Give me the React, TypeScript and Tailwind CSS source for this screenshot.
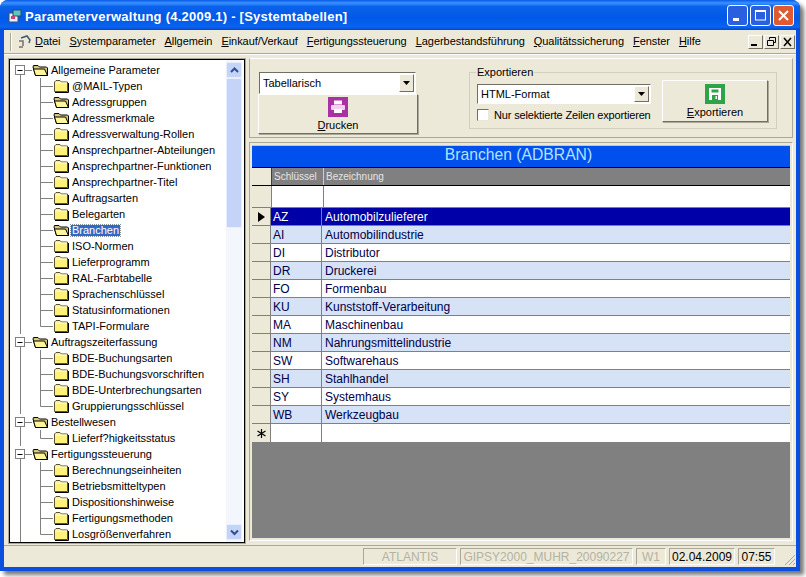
import type { ReactNode } from 'react';

type TreeGroup = { name: string; items: string[] };

const TREE: TreeGroup[] = [
  {
    name: 'Allgemeine Parameter',
    items: [
      '@MAIL-Typen', 'Adressgruppen', 'Adressmerkmale', 'Adressverwaltung-Rollen', 'Ansprechpartner-Abteilungen',
      'Ansprechpartner-Funktionen', 'Ansprechpartner-Titel', 'Auftragsarten', 'Belegarten', 'Branchen', 'ISO-Normen',
      'Lieferprogramm', 'RAL-Farbtabelle', 'Sprachenschlüssel', 'Statusinformationen', 'TAPI-Formulare',
    ],
  },
  {
    name: 'Auftragszeiterfassung',
    items: ['BDE-Buchungsarten', 'BDE-Buchungsvorschriften', 'BDE-Unterbrechungsarten', 'Gruppierungsschlüssel'],
  },
  { name: 'Bestellwesen', items: ['Lieferf?higkeitsstatus'] },
  {
    name: 'Fertigungssteuerung',
    items: ['Berechnungseinheiten', 'Betriebsmitteltypen', 'Dispositionshinweise', 'Fertigungsmethoden', 'Losgrößenverfahren'],
  },
];

const OPEN_ITEMS = ['Adressgruppen', 'Adressmerkmale', 'Branchen'];

const ROWS = [
  ['AZ', 'Automobilzulieferer'],
  ['AI', 'Automobilindustrie'],
  ['DI', 'Distributor'],
  ['DR', 'Druckerei'],
  ['FO', 'Formenbau'],
  ['KU', 'Kunststoff-Verarbeitung'],
  ['MA', 'Maschinenbau'],
  ['NM', 'Nahrungsmittelindustrie'],
  ['SW', 'Softwarehaus'],
  ['SH', 'Stahlhandel'],
  ['SY', 'Systemhaus'],
  ['WB', 'Werkzeugbau'],
];

const MENU = [
  ['D', 'atei'], ['S', 'ystemparameter'], ['A', 'llgemein'], ['E', 'inkauf/Verkauf'], ['F', 'ertigungssteuerung'],
  ['L', 'agerbestandsführung'], ['Q', 'ualitätssicherung'], ['F', 'enster'], ['H', 'ilfe'],
];

function Folder({ open }: { open?: boolean }) {
  if (open) {
    return (
      <svg width="18" height="14" viewBox="0 0 18 14" className="shrink-0">
        <path d="M3.5 12.5 L1 4 L1.5 2.5 L6 2.5 L7.5 4 L14.5 4 L15.5 5 L15.5 12.5 Z" fill="#d8c878" stroke="#000" />
        <path d="M3.5 12.5 L1.5 6 L12.5 6 L15.5 12.5 Z" fill="#fff59a" stroke="#000" />
      </svg>
    );
  }
  return (
    <svg width="16" height="14" viewBox="0 0 16 14" className="shrink-0">
      <path d="M1.5 12.5 L1.5 3 L3 1.5 L7 1.5 L8.5 3 L14.5 3 L14.5 12.5 Z" fill="#fff27c" stroke="#5c5330" />
      <path d="M2 4 L14 4" stroke="#fffde0" />
      <path d="M2 13.5 L15.5 13.5 L15.5 4" stroke="#000" fill="none" />
    </svg>
  );
}

function RootGuide() {
  return (
    <svg width="22" height="16" viewBox="0 0 22 16" className="shrink-0">
      <path d="M10.5 13 V16 M15 8.5 H22" stroke="#808080" />
      <rect x="5.5" y="3.5" width="9" height="9" fill="#fff" stroke="#808080" />
      <path d="M7.5 8.5 H12.5" stroke="#000" />
    </svg>
  );
}

function ChildGuide({ last }: { last: boolean }) {
  return (
    <svg width="43" height="16" viewBox="0 0 43 16" className="shrink-0">
      <path
        d={last ? 'M10.5 0 V16 M30.5 0 V8.5 H43' : 'M10.5 0 V16 M30.5 0 V16 M30.5 8.5 H43'}
        fill="none"
        stroke="#808080"
      />
    </svg>
  );
}

function TreeRow({ group }: { group: TreeGroup }) {
  return (
    <>
      <div className="flex h-4 items-center">
        <RootGuide />
        <Folder open />
        <span className="ml-[1px]">{group.name}</span>
      </div>
      {group.items.map((item, i) => {
        const selected = item === 'Branchen';
        const open = OPEN_ITEMS.includes(item);
        return (
          <div key={item} className="flex h-4 items-center">
            <ChildGuide last={i === group.items.length - 1} />
            <Folder open={open} />
            <span
              className={
                selected
                  ? 'bg-[#316ac5] px-[1px] text-white outline-1 outline-dotted outline-[#8090a0]'
                  : open
                    ? 'px-[1px]'
                    : 'ml-[2px] px-[1px]'
              }
            >
              {item}
            </span>
          </div>
        );
      })}
    </>
  );
}

function ScrollButton({ up }: { up?: boolean }) {
  return (
    <div className="flex h-4 items-center justify-center rounded-[2px] border border-[#e8eefc] bg-[#c4d4f8]">
      <svg width="9" height="7" viewBox="0 0 9 7">
        <path d={up ? 'M1 5 L4.5 1.5 L8 5' : 'M1 1.5 L4.5 5 L8 1.5'} fill="none" stroke="#33508c" strokeWidth="2" />
      </svg>
    </div>
  );
}

function ComboArrow() {
  return (
    <div className="flex w-[15px] items-center justify-center border border-t-white border-l-white border-r-[#716f64] border-b-[#716f64] bg-[#ece9d8]">
      <svg width="7" height="4" viewBox="0 0 7 4">
        <path d="M0 0 H7 L3.5 4 Z" fill="#000" />
      </svg>
    </div>
  );
}

function Raised({ className, children }: { className: string; children: ReactNode }) {
  return (
    <div className={`flex flex-col items-center border border-t-white border-l-white border-r-[#716f64] border-b-[#716f64] bg-[#ece9d8] shadow-[1px_1px_0_#aca899] ${className}`}>
      {children}
    </div>
  );
}

function CaptionButton({ color, children }: { color: string; children: ReactNode }) {
  return (
    <div className={`flex h-[21px] w-[21px] items-center justify-center rounded-[3px] border border-white ${color}`}>
      <svg width="13" height="13" viewBox="0 0 13 13">
        {children}
      </svg>
    </div>
  );
}

function MdiButton({ children }: { children: ReactNode }) {
  return (
    <div className="flex h-[14px] w-[15px] items-center justify-center border border-t-white border-l-white border-r-[#716f64] border-b-[#716f64] bg-[#ece9d8]">
      <svg width="11" height="10" viewBox="0 0 11 10">
        {children}
      </svg>
    </div>
  );
}

function StatusCell({ className, children }: { className: string; children?: ReactNode }) {
  return (
    <div className={`flex h-[17px] items-center justify-center border border-t-[#aca899] border-l-[#aca899] border-r-white border-b-white ${className}`}>
      {children}
    </div>
  );
}

export default function App() {
  return (
    <div className="h-[577px] w-[806px] overflow-hidden bg-white font-['Liberation_Sans',sans-serif] text-[11px] leading-none text-black">
      {/* Window frame */}
      <div className="flex h-[571px] w-[800px] flex-col overflow-hidden rounded-t-[8px] bg-[#0a4fe0] shadow-[4px_4px_4px_#777]">
        {/* Title bar */}
        <div className="flex h-[30px] shrink-0 items-center bg-[linear-gradient(180deg,#0a5ae8_0%,#3a93ff_10%,#0a62ec_22%,#0058e6_60%,#0a64f0_90%,#0048c8_100%)] pl-[8px] pr-[6px]">
          <svg width="14" height="14" viewBox="0 0 14 14" className="mt-[2px] shrink-0">
            <rect x="1" y="4" width="9" height="9" fill="#e8f0f8" stroke="#40506a" />
            <rect x="5" y="1" width="8" height="6" fill="#58c8c0" stroke="#2a4a6a" />
            <rect x="3" y="7" width="4" height="3" fill="#d04070" />
          </svg>
          <span className="ml-[3px] mt-[3px] text-[13px] font-bold tracking-[0.24px] text-white">
            Parameterverwaltung (4.2009.1) - [Systemtabellen]
          </span>
          <div className="ml-auto flex gap-[2px]">
            <CaptionButton color="bg-[#2a5fe0]">
              <rect x="2" y="9" width="6" height="3" fill="#fff" />
            </CaptionButton>
            <CaptionButton color="bg-[#2a5fe0]">
              <rect x="1.5" y="2" width="10" height="9" fill="none" stroke="#fff" />
              <rect x="1" y="1" width="11" height="2" fill="#fff" />
            </CaptionButton>
            <CaptionButton color="bg-[#dd5a32]">
              <path d="M2 2 L11 11 M11 2 L2 11" stroke="#fff" strokeWidth="2" />
            </CaptionButton>
          </div>
        </div>

        <div className="mx-[4px] mb-[4px] flex min-h-0 flex-1 flex-col bg-[#ece9d8]">
          {/* Menu bar */}
          <div className="flex h-[24px] shrink-0 items-center border-b border-[#aca899] pl-[6px] pr-[1px] shadow-[0_1px_0_#fff]">
            <div className="h-[18px] w-[2px] border-l border-r border-l-[#aca899] border-r-white" />
            <svg width="15" height="14" viewBox="0 0 15 14" className="ml-[5px] shrink-0">
              <path d="M4 3 L10 1 L13 5 L12 8" fill="none" stroke="#405878" strokeWidth="1.5" />
              <path d="M2 6 L6 6 L6 11 M2 12 L6 12" fill="none" stroke="#707070" strokeWidth="1.5" />
            </svg>
            <div className="ml-[3px] flex gap-[9px] whitespace-nowrap tracking-[-0.05px]">
              {MENU.map(([key, rest], i) => (
                <span key={i}>
                  <u>{key}</u>
                  {rest}
                </span>
              ))}
            </div>
            <div className="ml-auto flex gap-[1px]">
              <MdiButton>
                <rect x="1" y="7" width="6" height="2" fill="#000" />
              </MdiButton>
              <MdiButton>
                <path d="M3.5 2.5 V0.5 H9.5 V5.5 H7.5 M1.5 3.5 H7.5 V8.5 H1.5 Z" fill="none" stroke="#000" />
              </MdiButton>
              <MdiButton>
                <path d="M2 1 L9 9 M9 1 L2 9" stroke="#000" strokeWidth="1.5" />
              </MdiButton>
            </div>
          </div>

          <div className="flex min-h-0 flex-1 gap-[4px] pl-[5px] pr-[3px] pt-[4px]">
            {/* Tree */}
            <div className="mt-[1px] flex h-[484px] w-[236px] shrink-0 border border-black bg-white shadow-[0_0_0_1px_#aca899]">
              <div className="min-w-0 flex-1 overflow-hidden whitespace-nowrap pt-[2px]">
                {TREE.map((group) => (
                  <TreeRow key={group.name} group={group} />
                ))}
              </div>
              <div className="mr-[2px] flex w-[16px] shrink-0 flex-col bg-[#f3f6fd] py-[2px]">
                <ScrollButton up />
                <div className="h-[150px] rounded-[2px] border border-[#e8eefc] bg-[#c4d4f8]" />
                <div className="flex-1" />
                <ScrollButton />
              </div>
            </div>

            {/* Right side */}
            <div className="flex min-w-0 flex-1 flex-col">
              <div className="flex h-[80px] shrink-0 items-start border border-t-white border-l-[#aca899] border-r-[#aca899] border-b-[#aca899] pl-[8px] pt-[13px]">
                <div className="w-[160px]">
                  <div className="ml-[1px] flex h-[22px] w-[157px] border border-t-[#716f64] border-l-[#716f64] border-r-white border-b-white bg-white p-[1px]">
                    <span className="flex-1 self-center pl-[2px]">Tabellarisch</span>
                    <ComboArrow />
                  </div>
                  <Raised className="h-[40px] w-[160px] pt-[2px]">
                    <div className="flex h-[20px] w-[20px] items-center justify-center bg-[#a832a4]">
                      <svg width="16" height="14" viewBox="0 0 16 14">
                        <rect x="4" y="0.5" width="8" height="4" fill="#fff" />
                        <rect x="1" y="5" width="14" height="5" rx="1" fill="#f4d0f0" />
                        <rect x="4" y="9" width="8" height="4" fill="#fff" />
                      </svg>
                    </div>
                    <span className="mt-[3px]">
                      <u>D</u>rucken
                    </span>
                  </Raised>
                </div>

                <fieldset className="ml-[51px] -mt-[6px] flex h-[63px] w-[308px] items-start border border-[#d0d0bf] pl-[7px] pt-[5px]">
                  <legend className="-ml-[1px] px-[1px] leading-[13px]">Exportieren</legend>
                  <div className="w-[174px]">
                    <div className="flex h-[20px] w-[174px] border border-t-[#716f64] border-l-[#716f64] border-r-white border-b-white bg-white p-[1px]">
                      <span className="flex-1 self-center pl-[2px]">HTML-Format</span>
                      <ComboArrow />
                    </div>
                    <div className="mt-[5px] flex items-center whitespace-nowrap">
                      <div className="h-[12px] w-[12px] shrink-0 border border-t-[#716f64] border-l-[#716f64] border-r-[#e8e6d8] border-b-[#e8e6d8] bg-white" />
                      <span className="ml-[5px] tracking-[-0.16px]">Nur selektierte Zeilen exportieren</span>
                    </div>
                  </div>
                  <Raised className="-mt-[4px] ml-[11px] h-[42px] w-[106px] pt-[3px]">
                    <div className="flex h-[20px] w-[20px] items-center justify-center bg-[#2ea44a]">
                      <svg width="14" height="14" viewBox="0 0 14 14">
                        <path d="M1 1 H13 V13 H1 Z" fill="#fff" />
                        <rect x="3.5" y="2.5" width="7" height="3" fill="#2ea44a" />
                        <rect x="4" y="8" width="6" height="5" fill="#2ea44a" />
                        <rect x="7.5" y="9" width="1.5" height="3" fill="#fff" />
                      </svg>
                    </div>
                    <span className="mt-[3px]">
                      <u>E</u>xportieren
                    </span>
                  </Raised>
                </fieldset>
              </div>

              {/* Grid */}
              <div className="mt-[4px] flex h-[399px] flex-col border border-t-[#aca899] border-l-[#aca899] border-r-white border-b-white p-[2px]">
                <div className="flex h-[22px] shrink-0 items-center justify-center border-t border-[#c8c8c8] bg-[#0050ee] pb-[3px] pr-[5px] text-[15.7px] text-[#b4e2ff]">
                  Branchen (ADBRAN)
                </div>
                <div className="flex min-h-0 flex-1 flex-col bg-[#808080]">
                  <div className="flex h-[19px] shrink-0 border-y border-black">
                    <div className="w-[19px] shrink-0 bg-[#ece9d8]" />
                    <div className="flex w-[52px] shrink-0 items-center border-l border-[#404040] pl-[2px] text-[10px] text-[#e4e4e4]">
                      Schlüssel
                    </div>
                    <div className="flex flex-1 items-center border-l border-white/60 pl-[2px] text-[10px] text-[#e4e4e4]">
                      Bezeichnung
                    </div>
                  </div>
                  <div className="flex h-[22px] shrink-0 border-b border-[#808080] bg-white">
                    <div className="w-[19px] shrink-0 bg-[#ece9d8]" />
                    <div className="w-[52px] shrink-0 border-l border-[#808080]" />
                    <div className="flex-1 border-l border-[#808080]" />
                  </div>
                  {ROWS.map(([code, label], i) => {
                    const selected = i === 0;
                    const rowColor = selected
                      ? 'bg-[#0000a8] text-white'
                      : i % 2 === 1
                        ? 'bg-[#d6e2f6] text-[#000048]'
                        : 'bg-white text-[#000048]';
                    return (
                      <div key={code} className="flex h-[18px] shrink-0 border-b border-[#808080] text-[12px]">
                        <div className="flex w-[19px] shrink-0 items-center justify-center border-r border-[#808080] bg-[#ece9d8]">
                          {selected && (
                            <svg width="7" height="10" viewBox="0 0 7 10">
                              <path d="M0 0 L7 5 L0 10 Z" fill="#000" />
                            </svg>
                          )}
                        </div>
                        <div className={`flex w-[51px] shrink-0 items-center border-r border-[#808080] pl-[2px] ${rowColor}`}>{code}</div>
                        <div className={`flex flex-1 items-center pl-[3px] ${rowColor}`}>{label}</div>
                      </div>
                    );
                  })}
                  <div className="flex h-[18px] shrink-0 bg-white">
                    <div className="flex w-[19px] shrink-0 items-center justify-center border-r border-[#808080] bg-[#ece9d8]">
                      <svg width="9" height="9" viewBox="0 0 9 9">
                        <path d="M4.5 0 V9 M0.5 2 L8.5 7 M8.5 2 L0.5 7" stroke="#000" strokeWidth="1.2" />
                      </svg>
                    </div>
                    <div className="w-[51px] shrink-0 border-r border-[#808080]" />
                    <div className="flex-1" />
                  </div>
                </div>
              </div>
            </div>
          </div>

          {/* Status bar */}
          <div className="flex h-[22px] shrink-0 items-center gap-[3px] border-t border-[#aca899] pl-[359px] text-[12px] text-[#b4b2a2]">
            <StatusCell className="w-[94px]">ATLANTIS</StatusCell>
            <StatusCell className="w-[173px] overflow-hidden whitespace-nowrap">GIPSY2000_MUHR_20090227</StatusCell>
            <StatusCell className="w-[30px]">W1</StatusCell>
            <StatusCell className="w-[66px] text-black">02.04.2009</StatusCell>
            <StatusCell className="w-[37px] text-black">07:55</StatusCell>
            <svg width="14" height="14" viewBox="0 0 14 14" className="ml-auto mt-[4px] shrink-0">
              <path d="M13 3 L3 13 M13 7 L7 13 M13 11 L11 13" stroke="#aca899" />
            </svg>
          </div>
        </div>
      </div>
    </div>
  );
}
